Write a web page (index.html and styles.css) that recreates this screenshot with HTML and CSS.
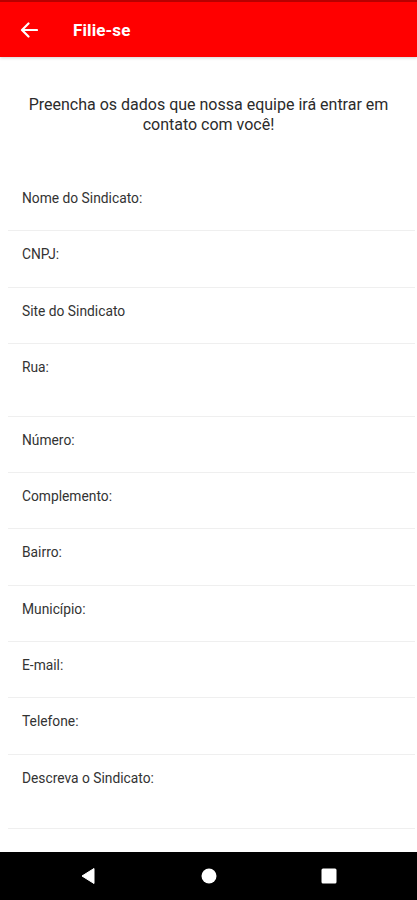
FILE: index.html
```html
<!DOCTYPE html>
<html lang="pt">
<head>
<meta charset="utf-8">
<title>Filie-se</title>
<link rel="stylesheet" href="styles.css">
</head>
<body>
<div class="screen">
  <header class="appbar">
    <svg class="back" width="18" height="16" viewBox="0 0 18 16" aria-hidden="true">
      <path d="M17 8H2.5M8.5 1.5L2 8l6.5 6.5" fill="none" stroke="#fff" stroke-width="2.2" stroke-linecap="round" stroke-linejoin="round"/>
    </svg>
    <h1 class="title">Filie-se</h1>
  </header>
  <main class="content">
    <p class="intro">Preencha os dados que nossa equipe irá entrar em contato com você!</p>
    <div class="form">
      <div class="field">Nome do Sindicato:</div>
      <div class="field">CNPJ:</div>
      <div class="field">Site do Sindicato</div>
      <div class="field tall">Rua:</div>
      <div class="field">Número:</div>
      <div class="field">Complemento:</div>
      <div class="field">Bairro:</div>
      <div class="field">Município:</div>
      <div class="field">E-mail:</div>
      <div class="field">Telefone:</div>
      <div class="field taller">Descreva o Sindicato:</div>
    </div>
  </main>
  <nav class="navbar">
    <svg width="16" height="18" viewBox="0 0 16 18" aria-hidden="true"><path d="M14 1.5v15L2 9z" fill="#fff" stroke="#fff" stroke-width="1" stroke-linejoin="round"/></svg>
    <svg width="16" height="16" viewBox="0 0 16 16" aria-hidden="true"><circle cx="8" cy="8" r="7.5" fill="#fff"/></svg>
    <svg width="16" height="16" viewBox="0 0 16 16" aria-hidden="true"><rect x="0.5" y="0.5" width="15" height="15" rx="1.5" fill="#fff"/></svg>
  </nav>
</div>
</body>
</html>
```

FILE: styles.css
```css
* { box-sizing: border-box; }
html, body { margin: 0; padding: 0; }
body {
  font-family: Roboto, "Noto Sans", "Liberation Sans", sans-serif;
  background: #fff;
  color: #333;
}
.screen {
  width: 417px;
  height: 900px;
  display: flex;
  flex-direction: column;
  overflow: hidden;
}
.appbar {
  height: 57px;
  flex: none;
  background: #ff0000;
  border-top: 2px solid #b80000;
  display: flex;
  align-items: center;
  padding-left: 20px;
  box-shadow: 0 1px 3px rgba(0,0,0,0.18);
}
.back { flex: none; margin-top: 1px; }
.title {
  margin: 0 0 0 35px;
  font-size: 17px;
  font-weight: 700;
  color: #fff;
  letter-spacing: 0.1px;
}
.content {
  flex: 1;
}
.intro {
  margin: 38px 14px 0;
  text-align: center;
  font-size: 16px;
  line-height: 20px;
  color: #2b2b2b;
}
.form {
  margin-top: 40px;
}
.field {
  height: 56.3px;
  margin: 0 2px 0 8px;
  padding: 15px 0 0 14px;
  font-size: 13.8px;
  line-height: 17px;
  color: #333;
  border-bottom: 1px solid #efefef;
}
.field.tall { height: 73px; }
.field.taller { height: 74px; }
.navbar {
  height: 48px;
  flex: none;
  background: #000;
  display: flex;
  align-items: center;
  padding: 0 80px 0 80px;
  justify-content: space-between;
}
```
